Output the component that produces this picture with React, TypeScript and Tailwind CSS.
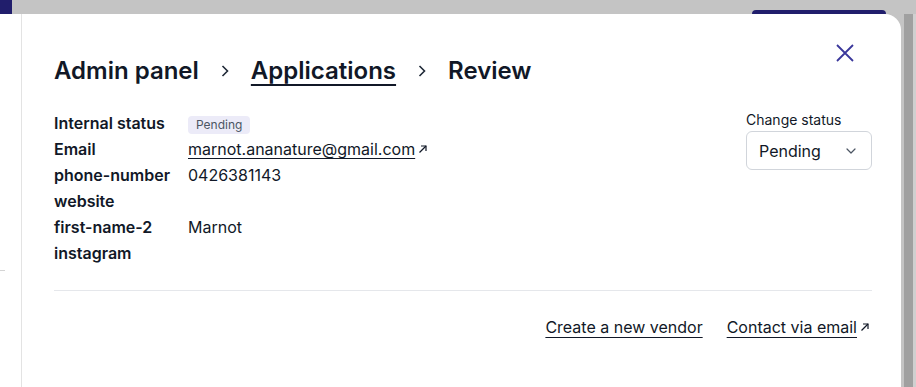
import { ChevronDown } from "lucide-react";

const font = { fontFamily: "Inter, 'Noto Sans', sans-serif" };

function ArrowOut({ className = "" }: { className?: string }) {
  return (
    <svg viewBox="0 0 10 10" className={className} fill="none" stroke="currentColor" strokeWidth="1.2">
      <path d="M1.5 8.5 L8 2" />
      <path d="M3 2 H8 V7" />
    </svg>
  );
}

function Crumb() {
  return (
    <svg viewBox="0 0 10 14" className="w-[10px] h-[14px] mx-[21px] text-[#1f2937]" fill="none" stroke="currentColor" strokeWidth="1.6">
      <path d="M2.5 2 L7.5 7 L2.5 12" />
    </svg>
  );
}

const rows: { label: string; value?: React.ReactNode }[] = [
  {
    label: "Internal status",
    value: (
      <span className="inline-flex items-center h-[18px] px-[8px] rounded-[4px] bg-[#ecebf8] text-[12px] text-[#4b5563]">
        Pending
      </span>
    ),
  },
  {
    label: "Email",
    value: (
      <span className="inline-flex items-center gap-[3px]">
        <a className="underline underline-offset-[3px] decoration-1">marnot.ananature@gmail.com</a>
        <ArrowOut className="w-[10px] h-[10px]" />
      </span>
    ),
  },
  { label: "phone-number", value: "0426381143" },
  { label: "website" },
  { label: "first-name-2", value: "Marnot" },
  { label: "instagram" },
];

export default function App() {
  return (
    <div className="w-[916px] h-[387px] overflow-hidden bg-[#c4c4c4] flex flex-col text-[#111827]" style={font}>
      <div className="h-[14px] flex shrink-0">
        <div className="w-[12px] h-full bg-[#211e6c]" />
        <div className="ml-auto mr-[30px] mt-[10px] w-[134px] h-[4px] rounded-t-[6px] bg-[#211e6c]" />
      </div>
      <div className="flex flex-1">
        <div className="w-[21px] bg-white pt-[256px]">
          <div className="w-[5px] h-px bg-[#d4d4d4]" />
        </div>
        <div className="relative flex-1 bg-white border-l border-[#e3e3e3] rounded-tr-[16px] pl-[32px] pr-[29px] pt-[41px]">
          <button className="absolute top-[30px] right-[47px] w-[18px] h-[18px] text-[#3a379b]">
            <svg viewBox="0 0 18 18" className="w-[18px] h-[18px]" fill="none" stroke="currentColor" strokeWidth="1.8">
              <path d="M1 1 L17 17 M17 1 L1 17" />
            </svg>
          </button>
          <div className="flex items-center h-[32px] text-[24px] font-semibold">
            <span>Admin panel</span>
            <Crumb />
            <a className="underline underline-offset-[5px] decoration-[2px]">Applications</a>
            <Crumb />
            <span>Review</span>
          </div>
          <div className="flex mt-[23px]">
            <div className="flex-1">
              {rows.map((r) => (
                <div key={r.label} className="flex items-center h-[26px] text-[16px]">
                  <div className="w-[134px] font-semibold">{r.label}</div>
                  <div>{r.value}</div>
                </div>
              ))}
            </div>
            <div className="w-[126px]">
              <div className="text-[14px] leading-[20px]">Change status</div>
              <div className="mt-[1px] h-[39px] border border-[#d1d5db] rounded-[6px] flex items-center justify-between pl-[12px] pr-[12px] text-[16px]">
                <span>Pending</span>
                <ChevronDown size={16} strokeWidth={1.8} className="text-[#4b5563]" />
              </div>
            </div>
          </div>
          <div className="mt-[24px] h-px bg-[#e5e7eb]" />
          <div className="flex justify-end items-center gap-[24px] mt-[24px] h-[24px] text-[16px]">
            <a className="underline underline-offset-[4px] decoration-1">Create a new vendor</a>
            <span className="inline-flex items-center gap-[3px]">
              <a className="underline underline-offset-[4px] decoration-1">Contact via email</a>
              <ArrowOut className="w-[10px] h-[10px] mr-[2px]" />
            </span>
          </div>
        </div>
        <div className="w-[15px] flex">
          <div className="w-[3px]" />
          <div className="w-[9px] bg-[#a0a0a0]" />
          <div className="flex-1 bg-[#d0d0d0]" />
        </div>
      </div>
    </div>
  );
}
